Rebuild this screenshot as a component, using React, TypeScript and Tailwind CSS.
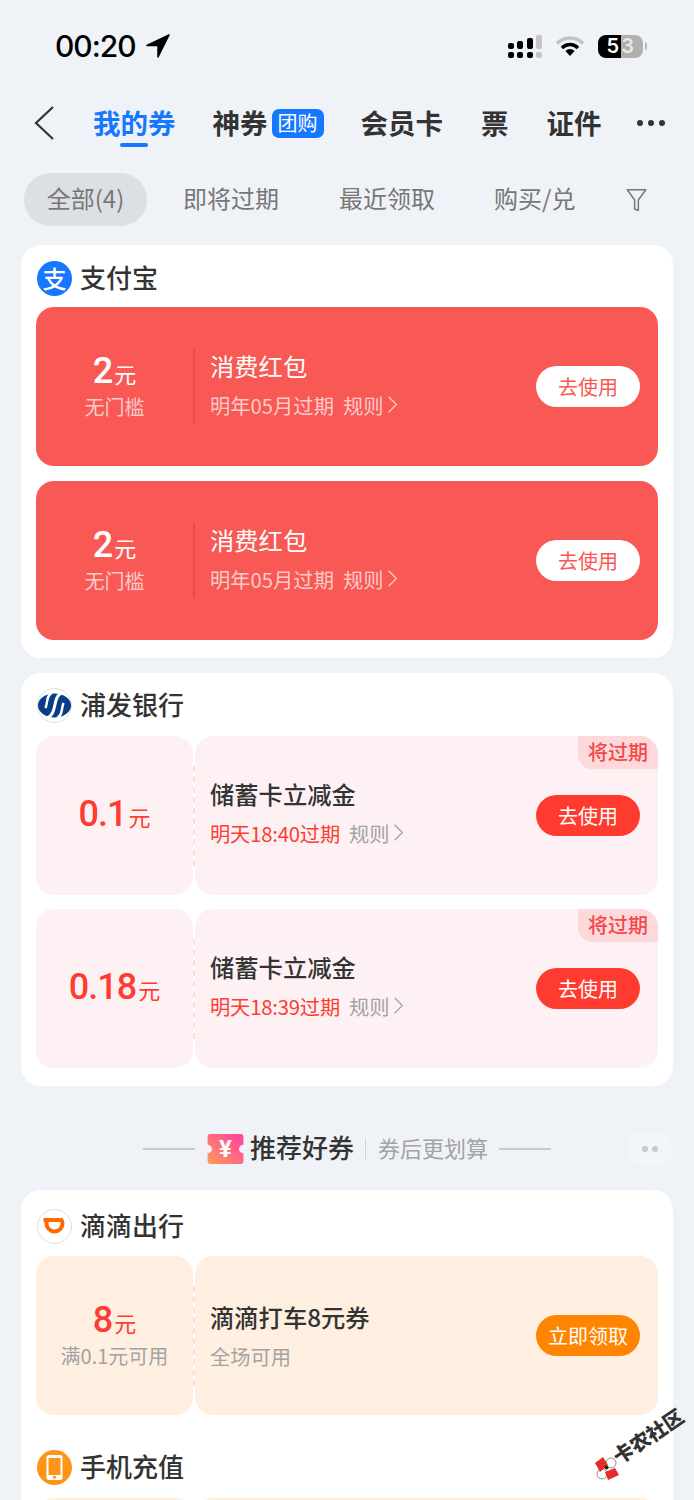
const Chevron = ({ className }: { className: string }) => (
  <svg viewBox="0 0 12 22" fill="none" className={className}>
    <path d="M1.500 2l9 9-9 9" stroke="currentColor" strokeWidth="1.4" />
  </svg>
);

const StatusBar = () => (
  <div className="flex h-[92px] items-center pl-[55px]">
    <span className="font-['Inter',sans-serif] text-[30px] font-medium leading-none tracking-[-1px] text-black">00:20</span>
    <svg viewBox="0 0 24 24" className="ml-[10px] h-[24px] w-[24px]">
      <path d="M23 1L1 11.5h11V23z" fill="#000" stroke="#000" strokeWidth="1.5" strokeLinejoin="round" />
    </svg>
    <div className="ml-[338px] flex h-[24px] items-end gap-[3.500px]">
      <div className="flex flex-col gap-[3px]">
        <div className="h-[6px] w-[6px] rounded-[2px] bg-black" />
        <div className="h-[6px] w-[6px] rounded-[2px] bg-black" />
      </div>
      <div className="flex flex-col gap-[3px]">
        <div className="h-[8px] w-[6px] rounded-[2px] bg-black" />
        <div className="h-[6px] w-[6px] rounded-[2px] bg-black" />
      </div>
      <div className="flex flex-col gap-[3px]">
        <div className="h-[11px] w-[6px] rounded-[2px] bg-black" />
        <div className="h-[6px] w-[6px] rounded-[2px] bg-black" />
      </div>
      <div className="flex flex-col gap-[3px]">
        <div className="h-[14px] w-[6px] rounded-[2px] bg-[#c4c4c4]" />
        <div className="h-[6px] w-[6px] rounded-[2px] bg-[#c4c4c4]" />
      </div>
    </div>
    <svg viewBox="0 0 30 22" className="ml-[13px] h-[22px] w-[30px]">
      <path d="M2 8.500a18 18 0 0 1 26 0" fill="none" stroke="#c2c2c2" strokeWidth="3.600" />
      <path d="M7 13a11 11 0 0 1 16 0" fill="none" stroke="#000" strokeWidth="3.400" />
      <path d="M15 21l-4.600-5a6.500 6.500 0 0 1 9.200 0z" fill="#000" />
    </svg>
    <div className="ml-[13px] flex h-[23px] w-[45px] overflow-hidden rounded-[8px] font-['Inter',sans-serif] text-[20px] font-semibold leading-[23px] text-white">
      <span className="w-[23px] bg-black pr-[2px] text-right">5</span>
      <span className="flex-1 bg-[#b0b0b0] text-left text-[#e8e8e8]">3</span>
    </div>
    <div className="ml-[2px] h-[8px] w-[2px] rounded-r-full bg-[#b8b8b8]" />
  </div>
);

const NavBar = () => (
  <div className="flex h-[60px] items-center pl-[34px] pt-[2px] text-[27.500px] font-semibold leading-none text-[#333]">
    <svg viewBox="0 0 20 34" fill="none" className="h-[34px] w-[20px] text-[#333]">
      <path d="M19 1L2 17l17 16" stroke="currentColor" strokeWidth="2.200" />
    </svg>
    <div className="relative ml-[39px] text-[#1677ff]">
      我的券
      <div className="absolute left-[27px] top-[34px] h-[4px] w-[28px] rounded-full bg-[#1677ff]" />
    </div>
    <span className="ml-[37px]">神券</span>
    <span className="ml-[4px] flex h-[29px] w-[52px] items-center justify-center rounded-[7px] bg-[#1677ff] text-[20px] font-normal text-white">团购</span>
    <span className="ml-[37px]">会员卡</span>
    <span className="ml-[38px]">票</span>
    <span className="ml-[38px]">证件</span>
    <div className="ml-[35px] flex gap-[5px]">
      <div className="h-[6px] w-[6px] rounded-full bg-[#333]" />
      <div className="h-[6px] w-[6px] rounded-full bg-[#333]" />
      <div className="h-[6px] w-[6px] rounded-full bg-[#333]" />
    </div>
  </div>
);

const FilterRow = () => (
  <div className="mt-[21px] flex h-[53px] items-center pl-[24px] text-[24px] leading-none text-[#777]">
    <span className="flex h-[53px] w-[123px] items-center justify-center rounded-full bg-[#dcdfe4] pb-[4px]">全部(4)</span>
    <span className="ml-[36px] pb-[4px]">即将过期</span>
    <span className="ml-[60px] pb-[4px]">最近领取</span>
    <span className="ml-[59px] pb-[4px]">购买/兑</span>
    <svg viewBox="0 0 24 28" fill="none" className="ml-[50px] h-[26px] w-[23px] text-[#777]">
      <path d="M2 3h20l-8 11v11l-4-1V14z" stroke="currentColor" strokeWidth="1.600" strokeLinejoin="round" />
    </svg>
  </div>
);

type CouponProps = {
  amount: string;
  note?: string;
  title: string;
  expire: string;
  rule?: boolean;
  action: string;
  tag?: boolean;
  tone: "red" | "pink" | "orange";
};

const Coupon = ({ amount, note, title, expire, rule = true, action, tag, tone }: CouponProps) => {
  const red = tone === "red";
  const pieceBg = red ? "bg-[#f85954]" : tone === "pink" ? "bg-[#fef1f3]" : "bg-[#ffefe0]";
  const noteColor = red ? "text-white/70" : "text-[#a3a3a3]";
  const expireColor = red
    ? "text-white/70"
    : tone === "pink"
      ? "tracking-[-0.2px] text-[#fd3d33]"
      : "text-[#a3a3a3]";
  const ruleColor = red ? "text-white/70" : "text-[#a3a3a3]";
  const bodyPad = red ? "pb-[4px]" : tone === "pink" ? "pb-[6px]" : "";
  const btn = red
    ? "bg-white text-[#f85954]"
    : tone === "pink"
      ? "bg-[#ff3b30] text-white"
      : "bg-[#ff8400] text-white";

  return (
    <div className={`relative flex h-[159px] ${red ? "overflow-hidden rounded-[18px] bg-[#f85954]" : ""}`}>
      <div className={`flex w-[157px] flex-col items-center justify-center pb-[3px] ${red ? "" : `rounded-[18px] ${pieceBg}`}`}>
        <div className={`flex items-baseline leading-none ${red ? "text-white" : "text-[#fd3d33]"}`}>
          <span className="font-['Roboto','Noto_Sans_CJK_SC',sans-serif] text-[36px] font-medium tracking-[-1px]">{amount}</span>
          <span className="ml-[2px] text-[22px]">元</span>
        </div>
        {note && <div className={`mt-[8px] text-[20px] leading-none ${noteColor}`}>{note}</div>}
      </div>
      <div className="relative w-[2px]">
        {red ? (
          <div className="absolute left-0 top-[42px] h-[75px] w-[2px] bg-[#eb4a44]" />
        ) : (
          <div className="absolute left-0 top-[30px] h-[100px] w-[2px] border-l-2 border-dashed border-[#ffdcdf]" />
        )}
      </div>
      <div className={`relative flex flex-1 items-center pl-[15px] pr-[18px] ${red ? "" : `overflow-hidden rounded-[18px] ${pieceBg}`}`}>
        {tag && (
          <div className="absolute right-0 top-0 flex h-[33px] w-[80px] items-center justify-center rounded-bl-[14px] bg-[#fdd9dc] pb-[2px] text-[20px] font-medium leading-none text-[#f4484b]">
            将过期
          </div>
        )}
        <div className={`flex-1 ${bodyPad}`}>
          <div className={`text-[24.300px] leading-none ${red ? "font-normal text-white" : "font-medium text-[#333]"}`}>{title}</div>
          <div className="mt-[16px] flex items-center text-[20.300px] leading-none">
            <span className={expireColor}>{expire}</span>
            {rule && (
              <>
                <span className={`ml-[9px] ${ruleColor}`}>规则</span>
                <Chevron className={`ml-[3px] h-[19px] w-[11px] ${ruleColor}`} />
              </>
            )}
          </div>
        </div>
        <div className={`flex h-[41px] w-[104px] items-center justify-center rounded-full text-[20px] leading-none ${btn}`}>{action}</div>
      </div>
    </div>
  );
};

const BrandHead = ({ logo, name, className }: { logo: React.ReactNode; name: string; className: string }) => (
  <div className={`flex items-center pl-[1px] ${className}`}>
    {logo}
    <span className="ml-[8px] pb-[3px] text-[26px] font-medium leading-none text-[#333]">{name}</span>
  </div>
);

const AlipayLogo = () => (
  <div className="flex h-[35px] w-[35px] items-center justify-center rounded-full bg-[#1677ff] pb-[2px] text-[24px] font-medium leading-none text-white">支</div>
);

const PufaLogo = () => (
  <svg viewBox="0 0 35 35" className="h-[35px] w-[35px]">
    <circle cx="17.500" cy="17.500" r="17" fill="#fff" stroke="#dedede" />
    <ellipse cx="17.500" cy="17.500" rx="16.500" ry="12" fill="#0b3d86" />
    <path d="M25 5C15 8 21 26 10 30" fill="none" stroke="#fff" strokeWidth="3" />
    <path d="M15 5C9 8 11 14 8.500 20" fill="none" stroke="#fff" strokeWidth="2.500" />
    <path d="M20 30C26 27 24 21 26.500 15" fill="none" stroke="#fff" strokeWidth="2.500" />
  </svg>
);

const DidiLogo = () => (
  <svg viewBox="0 0 35 35" className="h-[35px] w-[35px]">
    <circle cx="17.500" cy="17.500" r="17" fill="#fff" stroke="#dedede" />
    <path d="M6.500 11H23" fill="none" stroke="#ff6a00" strokeWidth="4" />
    <path d="M9.500 11v3.500a8 8 0 0 0 16 0c0-2-.7-3.500-2-5" fill="none" stroke="#ff6a00" strokeWidth="4" />
  </svg>
);

const PhoneLogo = () => (
  <svg viewBox="0 0 35 35" className="h-[35px] w-[35px]">
    <circle cx="17.500" cy="17.500" r="17.500" fill="#ff9518" />
    <rect x="9.500" y="5" width="16" height="25" rx="2.500" fill="#fff" />
    <rect x="11.500" y="8" width="12" height="17" fill="#ff9518" />
    <rect x="16" y="26" width="3" height="2.500" fill="#ff9518" />
  </svg>
);

const RecommendHead = () => (
  <div className="relative mt-[45px] flex h-[36px] items-center justify-center text-center">
    <div className="h-[2px] w-[52px] bg-[#cbcbcb]" />
    <div className="relative ml-[12px] h-[30px] w-[37px]">
      <svg viewBox="0 0 37 31" className="h-[30px] w-[37px]">
        <defs>
          <linearGradient id="ticket" x1="0" y1="1" x2="1" y2="0">
            <stop offset="0" stopColor="#ff9a57" />
            <stop offset="1" stopColor="#ff3da6" />
          </linearGradient>
        </defs>
        <path d="M3 0h31a3 3 0 0 1 3 3v8a4.500 4.500 0 0 0 0 9v8a3 3 0 0 1-3 3H3a3 3 0 0 1-3-3v-8a4.500 4.500 0 0 0 0-9V3a3 3 0 0 1 3-3z" fill="url(#ticket)" />
      </svg>
      <span className="absolute inset-0 flex items-center justify-center font-['Roboto',sans-serif] text-[24px] font-bold leading-none text-white">¥</span>
    </div>
    <span className="ml-[6px] pb-[4px] text-[26px] font-medium leading-none text-[#333]">推荐好券</span>
    <div className="ml-[11px] h-[22px] w-[1px] bg-[#d2d4d8]" />
    <span className="ml-[12px] pb-[4px] text-[22px] leading-none text-[#a3a3a3]">券后更划算</span>
    <div className="ml-[11px] h-[2px] w-[52px] bg-[#cbcbcb]" />
    <div className="absolute left-[628px] top-[1px] flex h-[33px] w-[43px] items-center justify-center gap-[4px] rounded-[10px] bg-[#f2f5f9]">
      <div className="h-[6px] w-[6px] rounded-full bg-[#c6c9ce]" />
      <div className="h-[6px] w-[6px] rounded-full bg-[#c6c9ce]" />
    </div>
  </div>
);

const Watermark = () => (
  <>
    <svg viewBox="0 0 32 32" className="absolute left-[590px] top-[1450px] h-[32px] w-[32px]">
      <circle cx="21" cy="13" r="5" fill="#fff" stroke="#444" strokeWidth="0.600" />
      <circle cx="12" cy="24" r="5" fill="#fff" stroke="#444" strokeWidth="0.600" />
      <path d="M5 13l8-6 5 8-8 7zM15 22l10-4 4 7-11 5z" fill="#e52d27" />
      <circle cx="16.500" cy="17.500" r="2" fill="#222" />
    </svg>
    <span className="absolute left-[608px] top-[1426px] rotate-[-34deg] whitespace-nowrap text-[20px] font-black leading-none text-[#333]">卡农社区</span>
  </>
);

export default function App() {
  return (
    <div className="relative h-[1500px] w-[694px] overflow-hidden bg-[#eff3f8] font-['Noto_Sans_CJK_SC',sans-serif]">
      <StatusBar />
      <NavBar />
      <FilterRow />

      <section className="mx-[21px] mt-[19px] rounded-[20px] bg-white px-[15px] pb-[18px]">
        <BrandHead logo={<AlipayLogo />} name="支付宝" className="pt-[16px] pb-[11px]" />
        <div className="flex flex-col gap-[15px]">
          <Coupon tone="red" amount="2" note="无门槛" title="消费红包" expire="明年05月过期" action="去使用" />
          <Coupon tone="red" amount="2" note="无门槛" title="消费红包" expire="明年05月过期" action="去使用" />
        </div>
      </section>

      <section className="mx-[21px] mt-[15px] rounded-[20px] bg-white px-[15px] pb-[18px]">
        <BrandHead logo={<PufaLogo />} name="浦发银行" className="pt-[15px] pb-[13px]" />
        <div className="flex flex-col gap-[14px]">
          <Coupon tone="pink" tag amount="0.1" title="储蓄卡立减金" expire="明天18:40过期" action="去使用" />
          <Coupon tone="pink" tag amount="0.18" title="储蓄卡立减金" expire="明天18:39过期" action="去使用" />
        </div>
      </section>

      <RecommendHead />

      <section className="mx-[21px] mt-[23px] rounded-t-[20px] bg-white px-[15px] pb-[40px]">
        <BrandHead logo={<DidiLogo />} name="滴滴出行" className="pt-[19px] pb-[12px]" />
        <Coupon tone="orange" amount="8" note="满0.1元可用" title="滴滴打车8元券" expire="全场可用" rule={false} action="立即领取" />
        <BrandHead logo={<PhoneLogo />} name="手机充值" className="pt-[35px] pb-[13px]" />
        <div className="flex h-[159px] gap-[2px]">
          <div className="w-[157px] rounded-[18px] bg-[#ffefe0]" />
          <div className="flex-1 rounded-[18px] bg-[#ffefe0]" />
        </div>
      </section>

      <Watermark />
    </div>
  );
}
